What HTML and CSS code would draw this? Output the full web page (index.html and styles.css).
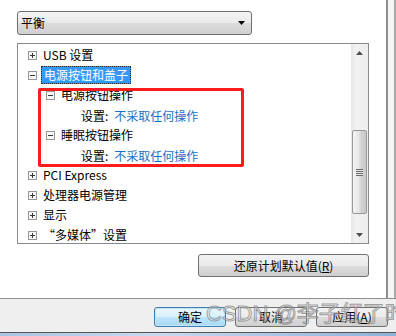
FILE: index.html
```html
<!DOCTYPE html>
<html>
<head>
<meta charset="utf-8">
<link rel="stylesheet" href="styles.css">
</head>
<body>
<div class="window">
  <div class="top">
    <div class="page">
      <div class="combo">
        <span>平衡</span>
        <svg class="combo-arrow" width="7" height="4" viewBox="0 0 7 4"><path d="M0 0h7L3.5 4z" fill="#000"/></svg>
      </div>
      <div class="listbox">
        <div class="tree">
          <div class="row lvl0">
            <svg class="exp" width="9" height="9" viewBox="0 0 9 9"><rect x="0.5" y="0.5" width="8" height="8" fill="#f6f6f6" stroke="#979797"/><path d="M2 4.5h5M4.5 2v5" stroke="#3a3a3a"/></svg>
            <span class="label">USB 设置</span>
          </div>
          <div class="row lvl0">
            <svg class="exp" width="9" height="9" viewBox="0 0 9 9"><rect x="0.5" y="0.5" width="8" height="8" fill="#f6f6f6" stroke="#979797"/><path d="M2 4.5h5" stroke="#3a3a3a"/></svg>
            <span class="label sel">电源按钮和盖子</span>
          </div>
          <div class="row lvl1">
            <svg class="exp" width="9" height="9" viewBox="0 0 9 9"><rect x="0.5" y="0.5" width="8" height="8" fill="#f6f6f6" stroke="#979797"/><path d="M2 4.5h5" stroke="#3a3a3a"/></svg>
            <span class="label">电源按钮操作</span>
          </div>
          <div class="row lvl2">
            <span class="key">设置:</span><span class="val">不采取任何操作</span>
          </div>
          <div class="row lvl1">
            <svg class="exp" width="9" height="9" viewBox="0 0 9 9"><rect x="0.5" y="0.5" width="8" height="8" fill="#f6f6f6" stroke="#979797"/><path d="M2 4.5h5" stroke="#3a3a3a"/></svg>
            <span class="label">睡眠按钮操作</span>
          </div>
          <div class="row lvl2">
            <span class="key">设置:</span><span class="val">不采取任何操作</span>
          </div>
          <div class="row lvl0">
            <svg class="exp" width="9" height="9" viewBox="0 0 9 9"><rect x="0.5" y="0.5" width="8" height="8" fill="#f6f6f6" stroke="#979797"/><path d="M2 4.5h5M4.5 2v5" stroke="#3a3a3a"/></svg>
            <span class="label">PCI Express</span>
          </div>
          <div class="row lvl0">
            <svg class="exp" width="9" height="9" viewBox="0 0 9 9"><rect x="0.5" y="0.5" width="8" height="8" fill="#f6f6f6" stroke="#979797"/><path d="M2 4.5h5M4.5 2v5" stroke="#3a3a3a"/></svg>
            <span class="label">处理器电源管理</span>
          </div>
          <div class="row lvl0">
            <svg class="exp" width="9" height="9" viewBox="0 0 9 9"><rect x="0.5" y="0.5" width="8" height="8" fill="#f6f6f6" stroke="#979797"/><path d="M2 4.5h5M4.5 2v5" stroke="#3a3a3a"/></svg>
            <span class="label">显示</span>
          </div>
          <div class="row lvl0">
            <svg class="exp" width="9" height="9" viewBox="0 0 9 9"><rect x="0.5" y="0.5" width="8" height="8" fill="#f6f6f6" stroke="#979797"/><path d="M2 4.5h5M4.5 2v5" stroke="#3a3a3a"/></svg>
            <span class="label">“多媒体”设置</span>
          </div>
        </div>
        <div class="scrollbar">
          <div class="sb-btn">
            <svg width="7" height="4" viewBox="0 0 7 4"><path d="M3.5 0L7 4H0z" fill="#4d4d4d"/></svg>
          </div>
          <div class="sb-track">
            <div class="sb-thumb">
              <div class="grip"></div>
            </div>
          </div>
          <div class="sb-btn">
            <svg width="7" height="4" viewBox="0 0 7 4"><path d="M0 0h7L3.5 4z" fill="#4d4d4d"/></svg>
          </div>
        </div>
        <div class="annot"></div>
      </div>
      <button class="btn reset">还原计划默认值(<u>R</u>)</button>
    </div>
    <div class="frame"></div>
  </div>
  <div class="bottom">
    <button class="btn default">确定</button>
    <button class="btn">取消</button>
    <button class="btn">应用(<u>A</u>)</button>
    <div class="watermark">CSDN @李子红了时</div>
  </div>
  <div class="taskbar"></div>
</div>
</body>
</html>
```
FILE: styles.css
```css
html, body {
  margin: 0;
  padding: 0;
}
body {
  width: 396px;
  height: 336px;
  overflow: hidden;
  font-family: "Noto Sans CJK SC", "Noto Sans", sans-serif;
  font-size: 12px;
  color: #000;
  background: #fff;
}
.window {
  width: 396px;
  height: 336px;
  display: flex;
  flex-direction: column;
}
.top {
  height: 298px;
  display: flex;
}
.page {
  width: 386px;
  height: 298px;
  box-sizing: border-box;
  padding: 11px 17px 0 17px;
  background: #fff;
  display: flex;
  flex-direction: column;
}
.frame {
  width: 10px;
  box-sizing: border-box;
  border-left: 2px solid #8e8f8f;
  border-right: 2px solid #a9a9a9;
  background: #f5f5f5;
}
.combo {
  width: 235px;
  height: 24px;
  box-sizing: border-box;
  border: 1px solid #707070;
  border-radius: 3px;
  background: linear-gradient(#f3f3f3, #ebebeb 50%, #dddddd 50%, #d0d0d0);
  display: flex;
  align-items: center;
  justify-content: space-between;
  padding: 0 6px 0 3px;
  line-height: 1;
}
.listbox {
  position: relative;
  margin-top: 8px;
  width: 352px;
  height: 201px;
  box-sizing: border-box;
  border: 1px solid #878a8f;
  display: flex;
  background: #fff;
}
.tree {
  flex: 1;
  padding-top: 1px;
  overflow: hidden;
}
.row {
  height: 20px;
  display: flex;
  align-items: center;
  white-space: nowrap;
}
.lvl0 { padding-left: 10px; }
.lvl1 { padding-left: 28px; }
.lvl2 { padding-left: 63px; }
.exp { flex: none; display: block; }
.label {
  margin-left: 4px;
  padding: 0 2px;
  height: 18px;
  line-height: 18px;
}
.label.sel {
  background: #3399ff;
  color: #fff;
  padding: 0 3px;
  outline: 1px dotted #2a2a2a;
  outline-offset: -1px;
}
.key {
  margin-right: 6px;
}
.val {
  color: #1a6fc4;
}
.scrollbar {
  width: 17px;
  display: flex;
  flex-direction: column;
  background: linear-gradient(90deg, #e6e6e6, #f2f2f2 30%, #ededed);
}
.sb-btn {
  height: 17px;
  display: flex;
  align-items: center;
  justify-content: center;
}
.sb-track {
  flex: 1;
  padding-top: 69px;
}
.sb-thumb {
  margin: 0 1px;
  height: 84px;
  box-sizing: border-box;
  border: 1px solid #979797;
  border-radius: 2px;
  background: linear-gradient(90deg, #f4f4f4, #e6e6e6 45%, #d4d4d4 60%, #c9c9c9);
  display: flex;
  align-items: center;
  justify-content: center;
}
.grip {
  width: 7px;
  height: 7px;
  background: repeating-linear-gradient(#6a6a6a 0 1px, #e8e8e8 1px 2px);
}
.annot {
  position: absolute;
  left: 20px;
  top: 44px;
  width: 206px;
  height: 79px;
  box-sizing: border-box;
  border: 3px solid #ff1c1c;
  border-radius: 2px;
  pointer-events: none;
}
.btn {
  font-family: "Noto Sans CJK SC", "Noto Sans", sans-serif;
  font-size: 12px;
  color: #000;
  border: 1px solid #707070;
  border-radius: 3px;
  background: linear-gradient(#f2f2f2, #ebebeb 50%, #dddddd 50%, #cfcfcf);
  padding: 0;
  line-height: 1;
  box-sizing: border-box;
}
.btn u { text-decoration: underline; }
.reset {
  margin-top: 10px;
  align-self: flex-end;
  width: 171px;
  height: 23px;
}
.bottom {
  position: relative;
  height: 35px;
  box-sizing: border-box;
  border-top: 1px solid #8f8f8f;
  border-bottom: 1px solid #555;
  background: #efefef;
  display: flex;
  align-items: flex-start;
  padding: 8px 0 0 154px;
  gap: 9px;
}
.bottom .btn {
  width: 72px;
  height: 20px;
}
.btn.default {
  border-color: #3c7fb1;
  background: linear-gradient(#eaf6fd, #d9f0fc 50%, #bee6fd 50%, #a7d9f5);
  box-shadow: inset 0 0 0 1px #c4e5f6;
}
.watermark {
  position: absolute;
  left: 206px;
  top: 0;
  font-family: "Liberation Sans", "Noto Sans CJK SC", sans-serif;
  font-size: 22px;
  line-height: 30px;
  white-space: nowrap;
  color: rgba(255, 255, 255, 0.4);
  -webkit-text-stroke: 1px rgba(120, 120, 120, 0.7);
  pointer-events: none;
}
.taskbar {
  height: 3px;
  background: linear-gradient(90deg, #a9c4e2, #c9daf0 40%, #8fb1d8);
}
```
